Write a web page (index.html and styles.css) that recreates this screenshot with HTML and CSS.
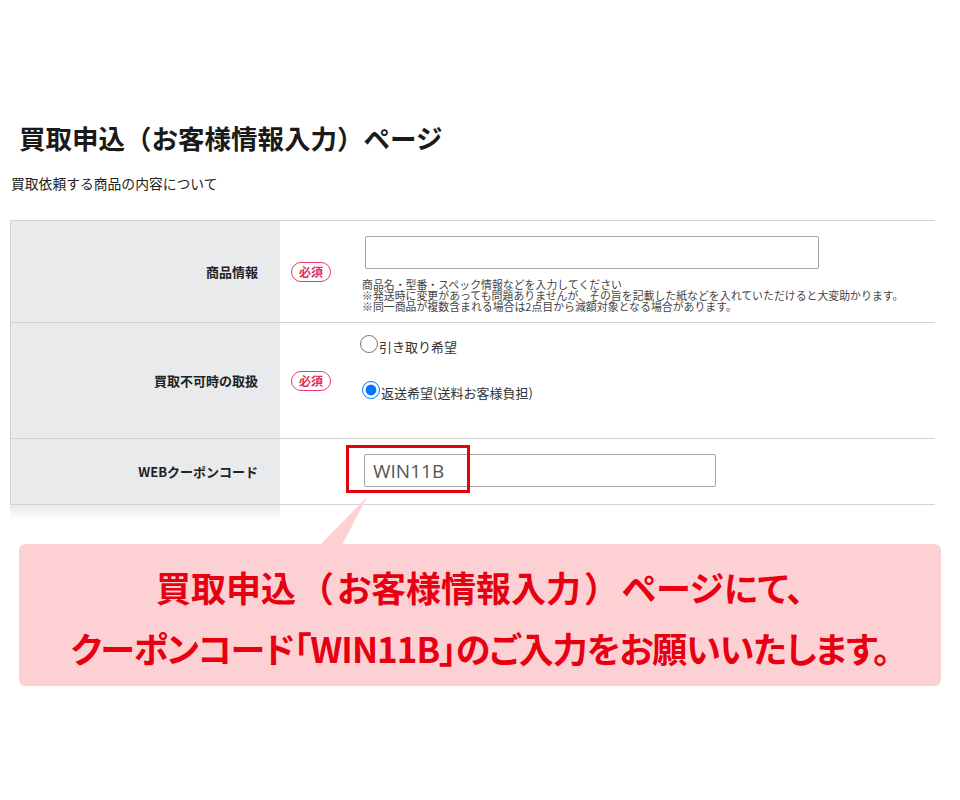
FILE: index.html
```html
<!DOCTYPE html>
<html lang="ja">
  <head>
    <meta charset="utf-8" />
    <meta name="viewport" content="width=device-width, initial-scale=1" />
    <link rel="stylesheet" href="styles.css">
  </head>
  <body>
    <div class="page">
      <h1 class="title">買取申込（お客様情報入力）ページ</h1>
      <p class="lead">買取依頼する商品の内容について</p>

      <div class="form-table">
        <div class="row row-item">
          <div class="row-label">商品情報</div>
          <div class="row-badge"><span class="badge">必須</span></div>
          <div class="row-field">
            <input type="text" class="input input-wide" />
            <p class="help">
              商品名・型番・スペック情報などを入力してください<br />
              ※発送時に変更があっても問題ありませんが、その旨を記載した紙などを入れていただけると大変助かります。<br />
              ※同一商品が複数含まれる場合は2点目から減額対象となる場合があります。
            </p>
          </div>
        </div>
        <div class="row row-return">
          <div class="row-label">買取不可時の取扱</div>
          <div class="row-badge"><span class="badge">必須</span></div>
          <div class="row-field">
            <label class="option"><input type="radio" name="ret" />引き取り希望</label>
            <label class="option option-second"><input type="radio" name="ret" checked />返送希望(送料お客様負担)</label>
          </div>
        </div>
        <div class="row row-coupon">
          <div class="row-label">WEBクーポンコード</div>
          <div class="row-badge"></div>
          <div class="row-field">
            <input type="text" class="input input-coupon" value="WIN11B" />
            <!-- annotation frame -->
            <span class="mark"></span>
          </div>
        </div>
      </div>
      <div class="table-fade"></div>

      <div class="callout">
        <svg class="callout-tip" width="48" height="48" viewBox="0 0 48 48">
          <polygon points="0,48 22,48 47,0" fill="#fdd1d3" />
        </svg>
        <p class="callout-line">買取申込<span class="paren">（</span>お客様情報入力<span class="paren">）</span>ページにて、</p>
        <p class="callout-line callout-tight">クーポンコード「WIN11B」のご入力をお願いいたします。</p>
      </div>
    </div>
  </body>
</html>
```

FILE: styles.css
```css
* {
  box-sizing: border-box;
}

body {
  margin: 0;
  background: #fff;
  color: #222;
  font-family: "Noto Sans CJK JP", "Noto Sans", sans-serif;
}

.page {
  width: 960px;
  height: 800px;
  padding-top: 118px;
}

.title {
  margin: 0;
  padding-left: 19px;
  font-size: 26.5px;
  line-height: 40px;
  font-weight: 700;
  color: #1a1a1a;
}

.lead {
  margin: 15px 0 0;
  padding-left: 11px;
  font-size: 13.8px;
  line-height: 20px;
}

.form-table {
  margin: 27px 0 0 10px;
  width: 925px;
  border-top: 1px solid #d2d2d2;
  border-left: 1px solid #d2d2d2;
}

.row {
  display: grid;
  grid-template-columns: 269px 80px 1fr;
  border-bottom: 1px solid #d2d2d2;
}

.row-item {
  height: 102px;
}

.row-return {
  height: 116px;
}

.row-coupon {
  height: 66px;
}

.row-label {
  display: flex;
  align-items: center;
  justify-content: flex-end;
  padding-right: 22px;
  background: #e9eaeb;
  font-size: 13px;
  font-weight: 700;
}

.row-badge {
  display: flex;
  align-items: center;
  padding-left: 11px;
}

.badge {
  display: inline-block;
  width: 40px;
  height: 20px;
  border: 1.5px solid #ec3a6c;
  border-radius: 10px;
  color: #e02c5c;
  font-size: 12px;
  font-weight: 700;
  line-height: 17px;
  text-align: center;
}

.row-field {
  position: relative;
}

.input {
  display: block;
  height: 33px;
  border: 1px solid #a5a5a5;
  border-radius: 2px;
  background: #fff;
}

.input-wide {
  width: 454px;
  margin: 15px 0 0 5px;
}

.help {
  margin: 10px 0 0 2px;
  font-size: 10.9px;
  line-height: 10.8px;
  color: #444;
}

.row-return .row-field {
  padding-top: 13px;
}

.option {
  display: flex;
  align-items: center;
  height: 20px;
  font-size: 13px;
  color: #333;
}

.option input {
  width: 18px;
  height: 18px;
  margin: 0 1px 0 0;
  position: relative;
  top: -2px;
}

.option-second {
  margin: 26px 0 0 2px;
}

.input-coupon {
  width: 352px;
  margin: 15px 0 0 4px;
  padding: 0 8px;
  font-family: "Open Sans", sans-serif;
  font-size: 19px;
  color: #555;
}

.mark {
  position: absolute;
  left: -14px;
  top: 6px;
  width: 124px;
  height: 48px;
  border: 3px solid #e50012;
}

.table-fade {
  margin-left: 10px;
  width: 270px;
  height: 16px;
  background: linear-gradient(#e9eaeb, rgba(255, 255, 255, 0));
}

.callout {
  position: relative;
  margin: 23px 0 0 19px;
  width: 922px;
  height: 142px;
  padding-top: 12px;
  background: #fdd1d3;
  border-radius: 6px;
  text-align: center;
}

.callout-tip {
  position: absolute;
  left: 301px;
  top: -47px;
}

.callout-line {
  margin: 0;
  color: #e60012;
  font-size: 35px;
  font-weight: 700;
  font-feature-settings: "palt";
  line-height: 61px;
}

.callout-line .paren {
  font-feature-settings: normal;
  margin: 0 3px;
}

.callout-tight {
  letter-spacing: -1px;
}
```
